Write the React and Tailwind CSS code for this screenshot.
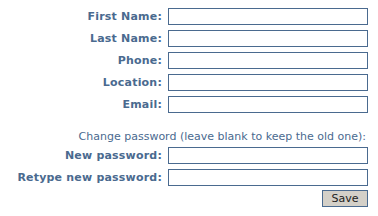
export default function App() {
  const font = { fontFamily: '"DejaVu Sans", Verdana, sans-serif' };
  const rows1 = ["First Name:", "Last Name:", "Phone:", "Location:", "Email:"];
  const rows2 = ["New password:", "Retype new password:"];
  const Label = ({ t }) => (
    <label className="text-right text-[11px] font-bold tracking-[0.2px] text-[#4a6a8f] leading-[17px] whitespace-nowrap">{t}</label>
  );
  const Input = () => (
    <input type="text" className="w-[200px] h-[17px] border border-[#4a6a8f] bg-white outline-none" />
  );
  return (
    <div className="w-[378px] h-[216px] bg-white relative" style={font}>
      <div className="flex justify-end pr-[10px] pt-[8px]">
        <div className="grid grid-cols-[auto_200px] gap-x-[6px] gap-y-[5px] items-center">
          {rows1.map((r) => (
            <div className="contents" key={r}>
              <Label t={r} />
              <Input />
            </div>
          ))}
          <div className="col-span-2 text-right text-[11px] text-[#4a6a8f] h-[14px] leading-[14px] mt-[12px] -mb-[2px] pr-[2px]">
            Change password (leave blank to keep the old one):
          </div>
          {rows2.map((r) => (
            <div className="contents" key={r}>
              <Label t={r} />
              <Input />
            </div>
          ))}
          <div className="col-span-2 flex justify-end -mt-[1px]">
            <button className="w-[46px] h-[17px] bg-[#d4d0c8] border border-[#4a6a8f] text-[11px] leading-[15px] text-[#222]">
              Save
            </button>
          </div>
        </div>
      </div>
    </div>
  );
}
